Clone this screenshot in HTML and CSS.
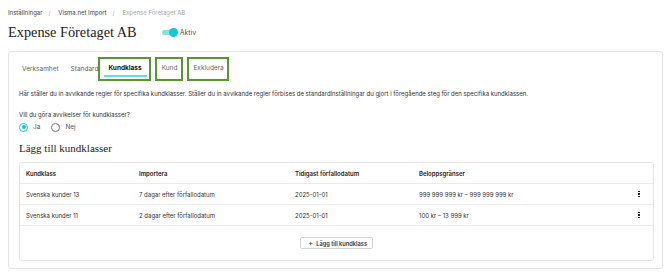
FILE: index.html
```html
<!DOCTYPE html>
<html lang="sv">
<head>
  <meta charset="UTF-8" />
  <title>Expense Företaget AB</title>
  <link rel="stylesheet" href="styles.css">
</head>
<body>
  <nav class="crumbs">
    <span>Inställningar</span><span class="sep">/</span>
    <span>Visma.net Import</span><span class="sep">/</span>
    <span class="current">Expense Företaget AB</span>
  </nav>

  <div class="title-row">
    <h1>Expense Företaget AB</h1>
    <label class="toggle"><span class="track"><span class="thumb"></span></span>Aktiv</label>
  </div>

  <div class="card">
    <div class="tabs">
      <div class="tab first">Verksamhet</div>
      <div class="tab">Standard</div>
      <div class="tab active marked">Kundklass</div>
      <div class="tab marked">Kund</div>
      <div class="tab marked">Exkludera</div>
    </div>

    <p class="intro">Här ställer du in avvikande regler för specifika kundklasser. Ställer du in avvikande regler förbises de standardinställningar du gjort i föregående steg för den specifika kundklassen.</p>

    <p class="question">Vill du göra avvikelser för kundklasser?</p>
    <div class="radios">
      <span class="radio on"></span><span>Ja</span>
      <span class="radio"></span><span>Nej</span>
    </div>

    <h2>Lägg till kundklasser</h2>

    <div class="table">
      <div class="row head">
        <div>Kundklass</div><div>Importera</div><div>Tidigast förfallodatum</div><div>Beloppsgränser</div><div></div>
      </div>
      <div class="row">
        <div>Svenska kunder 13</div><div>7 dagar efter förfallodatum</div><div>2025-01-01</div><div>999 999 999 kr – 999 999 999 kr</div><div class="kebab"><i></i><i></i><i></i></div>
      </div>
      <div class="row">
        <div>Svenska kunder 11</div><div>2 dagar efter förfallodatum</div><div>2025-01-01</div><div>100 kr – 13 999 kr</div><div class="kebab"><i></i><i></i><i></i></div>
      </div>
      <div class="foot">
        <button><span class="plus">+</span>Lägg till kundklass</button>
      </div>
    </div>
  </div>
</body>
</html>
```
FILE: styles.css
```css
body {
  margin: 0;
  padding: 8px 7px 0 8px;
  font-family: Inter, "Noto Sans", sans-serif;
  color: #222;
  background: #fff;
}
.crumbs {
  font-size: 6px;
  height: 10px;
  line-height: 10px;
  color: #444;
}
.crumbs .sep { color: #aaa; margin: 0 6px; }
.crumbs .current { color: #aaa; }

.title-row {
  display: flex;
  align-items: center;
  height: 29px;
  margin-bottom: 4px;
}
h1 {
  font-family: "Liberation Serif", serif;
  font-weight: 400;
  font-size: 14.3px;
  margin: 0 25px 0 0;
  color: #222;
}
.toggle {
  display: flex;
  align-items: center;
  font-size: 7px;
  color: #555;
  gap: 4px;
}
.track {
  position: relative;
  width: 14px;
  height: 5px;
  border-radius: 3px;
  background: #7fe3e6;
}
.thumb {
  position: absolute;
  right: -2px;
  top: -2px;
  width: 9px;
  height: 9px;
  border-radius: 50%;
  background: #12c9d1;
}

.card {
  border: 1px solid #e6e6e6;
  border-radius: 3px;
  padding: 4px 8px 7px 10px;
}
.tabs {
  display: flex;
  align-items: center;
  font-size: 6.5px;
  color: #666;
  height: 26px;
}
.tab {
  height: 24px;
  line-height: 24px;
  box-sizing: border-box;
  position: relative;
  margin-left: 12px;
}
.tab.first { margin-left: 3px; }
.tab.marked {
  border: 2.5px solid #5b9630;
  line-height: 19px;
  margin-left: 4px;
  padding: 0 5px;
}
.tab.marked:nth-child(4) { padding: 0 4px 0 5px; }
.tab.marked:nth-child(5) { padding: 0 3px 0 4px; margin-left: 4px; }
.tab.active {
  color: #111;
  font-weight: 700;
  padding: 0 7px 0 8px;
  margin-left: 0;
}
.tab.active::after {
  content: "";
  position: absolute;
  left: 4px;
  right: 2px;
  bottom: 2.5px;
  height: 1.5px;
  background: #5ee0e6;
}

.intro {
  font-size: 6px;
  margin: 8px 0 0;
  color: #333;
}
.question {
  font-size: 6px;
  margin: 14px 0 4px;
  color: #333;
}
.radios {
  display: flex;
  align-items: center;
  height: 10px;
  font-size: 6.5px;
  color: #555;
  gap: 5px;
  margin-top: 1px;
}
.radio {
  width: 9px;
  height: 9px;
  border: 1px solid #777;
  border-radius: 50%;
  box-sizing: border-box;
  position: relative;
}
.radios span:nth-child(3) { margin-left: 6px; }
.radio.on { border-color: #19c6cf; }
.radio.on::after {
  content: "";
  position: absolute;
  inset: 1.5px;
  border-radius: 50%;
  background: #19c6cf;
}

h2 {
  font-family: "Liberation Serif", serif;
  font-weight: 400;
  font-size: 11px;
  margin: 10px 0 8px;
  color: #222;
}

.table {
  border: 1px solid #e6e6e6;
  border-radius: 3px;
  font-size: 6px;
  color: #333;
}
.row {
  display: grid;
  grid-template-columns: 113px 156px 124px 1fr 28px;
  align-items: center;
  height: 20px;
  padding-left: 6px;
  border-bottom: 1px solid #ececec;
}
.row.head { font-weight: 600; color: #222; }
.kebab {
  display: flex;
  flex-direction: column;
  gap: 1px;
  align-items: center;
}
.kebab i { width: 1.5px; height: 1.5px; background: #222; }
.foot {
  display: flex;
  justify-content: center;
  padding: 11px 0 11px;
}
button {
  font-family: inherit;
  font-size: 5.7px;
  font-weight: 600;
  color: #333;
  background: #fff;
  border: 1px solid #d4d4d4;
  border-radius: 2px;
  height: 12px;
  padding: 0 5px 0 7px;
  display: flex;
  align-items: center;
}
.plus { font-size: 8px; font-weight: 400; margin-right: 3px; }
```
